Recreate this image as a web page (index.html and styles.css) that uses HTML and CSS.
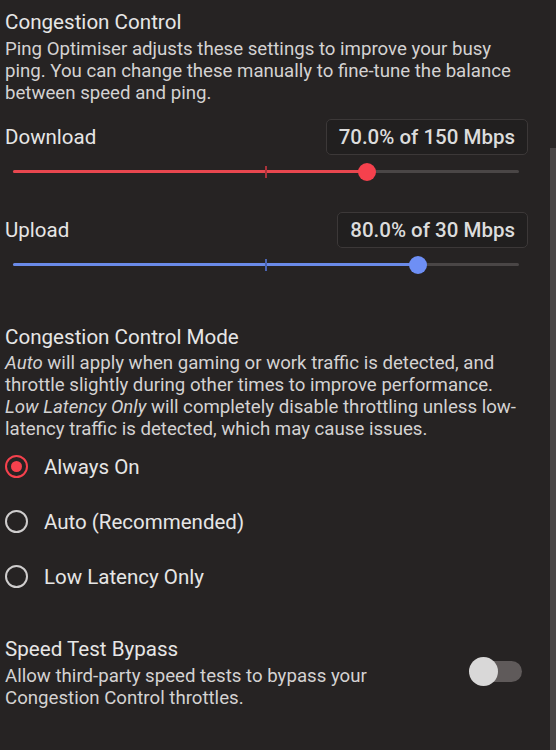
FILE: index.html
```html
<!DOCTYPE html>
<html>
<head>
<meta charset="utf-8">
<link rel="stylesheet" href="styles.css">
</head>
<body>
<div class="app">
  <main class="content">
    <section class="intro">
      <h2 class="title">Congestion Control</h2>
      <p class="desc">Ping Optimiser adjusts these settings to improve your busy<br>ping. You can change these manually to fine-tune the balance<br>between speed and ping.</p>
    </section>

    <section class="rate">
      <div class="rate-head">
        <span class="rate-label">Download</span>
        <span class="rate-value">70.0% of 150 Mbps</span>
      </div>
      <div class="slider red">
        <div class="track"></div>
        <div class="fill" style="width:70%"></div>
        <div class="tick"></div>
        <div class="thumb" style="left:70%"></div>
      </div>
    </section>

    <section class="rate">
      <div class="rate-head">
        <span class="rate-label">Upload</span>
        <span class="rate-value">80.0% of 30 Mbps</span>
      </div>
      <div class="slider blue">
        <div class="track"></div>
        <div class="fill" style="width:80%"></div>
        <div class="tick"></div>
        <div class="thumb" style="left:80%"></div>
      </div>
    </section>

    <section class="mode">
      <h2 class="title">Congestion Control Mode</h2>
      <p class="desc"><em>Auto</em> will apply when gaming or work traffic is detected, and<br>throttle slightly during other times to improve performance.<br><em>Low Latency Only</em> will completely disable throttling unless low-<br>latency traffic is detected, which may cause issues.</p>
      <ul class="radios">
        <li class="radio checked"><span class="ring"></span><span class="radio-label">Always On</span></li>
        <li class="radio"><span class="ring"></span><span class="radio-label">Auto (Recommended)</span></li>
        <li class="radio"><span class="ring"></span><span class="radio-label">Low Latency Only</span></li>
      </ul>
    </section>

    <section class="bypass">
      <div class="bypass-text">
        <h2 class="title">Speed Test Bypass</h2>
        <p class="desc">Allow third-party speed tests to bypass your<br>Congestion Control throttles.</p>
      </div>
      <div class="switch"><span class="switch-track"></span><span class="switch-knob"></span></div>
    </section>
  </main>
  <div class="scrollbar"><div class="scroll-thumb"></div></div>
</div>
</body>
</html>
```

FILE: styles.css
```css
html, body {
  margin: 0;
  padding: 0;
  background: #262323;
  height: 100%;
  overflow: hidden;
}
body {
  font-family: Roboto, "Liberation Sans", sans-serif;
  color: #e2e2e2;
}
.app {
  display: flex;
  height: 750px;
}
.content {
  flex: 1;
  padding: 8px 22px 0 5px;
}
.scrollbar {
  width: 6px;
  background: #2b2828;
  display: flex;
  flex-direction: column;
}
.scroll-thumb {
  margin-top: 148px;
  flex: 1;
  background: #4a4646;
}
.title {
  margin: 0;
  font-size: 20.6px;
  font-weight: 400;
  line-height: 28px;
  color: #e6e6e6;
}
.desc {
  margin: 2px 0 0 0;
  font-size: 18.65px;
  line-height: 22px;
  color: #d4d2d2;
  white-space: nowrap;
}
.desc em {
  font-style: italic;
}

.rate { margin-top: 15px; }
.rate + .rate { margin-top: 30px; }
.rate-head {
  display: flex;
  justify-content: space-between;
  align-items: center;
  height: 36px;
}
.rate-label {
  font-size: 20.5px;
  color: #e6e6e6;
}
.rate-value {
  box-sizing: border-box;
  height: 36px;
  font-size: 20.5px;
  font-weight: 500;
  color: #dcdcdc;
  border: 1px solid #3c3838;
  border-radius: 5px;
  background: #211f1f;
  padding: 0 12px;
  line-height: 34px;
}
.slider {
  position: relative;
  height: 20px;
  margin: 7px 9px 0 8px;
}
.track, .fill {
  position: absolute;
  left: 0;
  top: 8px;
  height: 3px;
  border-radius: 2px;
}
.track {
  right: 0;
  background: #4a4646;
}
.tick {
  position: absolute;
  left: 50%;
  top: 3.5px;
  width: 1.5px;
  height: 12px;
  margin-left: -1px;
}
.thumb {
  position: absolute;
  top: 0.5px;
  width: 18px;
  height: 18px;
  margin-left: -9px;
  border-radius: 50%;
}
.red .fill { background: #e8474f; }
.red .thumb { background: #f5414d; }
.red .tick { background: #a8323a; }
.blue .fill { background: #6a8ae8; }
.blue .thumb { background: #6e8ff5; }
.blue .tick { background: #4a63b0; }

.mode { margin-top: 48px; }
.mode .desc { margin-top: 1px; }
.radios {
  list-style: none;
  margin: 10.5px 0 0 0;
  padding: 0;
}
.radio {
  display: flex;
  align-items: center;
  height: 32px;
}
.radio + .radio { margin-top: 23px; }
.ring {
  box-sizing: border-box;
  width: 23px;
  height: 23px;
  border: 2.5px solid #cfcdcd;
  border-radius: 50%;
  margin-left: 0;
  margin-right: 16px;
  display: flex;
  align-items: center;
  justify-content: center;
}
.checked .ring { border-color: #f5414d; }
.checked .ring::after {
  content: "";
  width: 11px;
  height: 11px;
  border-radius: 50%;
  background: #f5414d;
}
.radio-label {
  font-size: 20.5px;
  color: #e6e6e6;
}

.bypass {
  display: flex;
  justify-content: space-between;
  align-items: center;
  margin-top: 42px;
}
.switch {
  position: relative;
  width: 53px;
  height: 29px;
  margin-right: 6px;
}
.switch-track {
  position: absolute;
  left: 10px;
  right: 0;
  top: 4px;
  height: 21px;
  border-radius: 11px;
  background: #5f5a5a;
}
.switch-knob {
  position: absolute;
  left: 0;
  top: 0;
  width: 29px;
  height: 29px;
  border-radius: 50%;
  background: #d9d8d8;
}
```
